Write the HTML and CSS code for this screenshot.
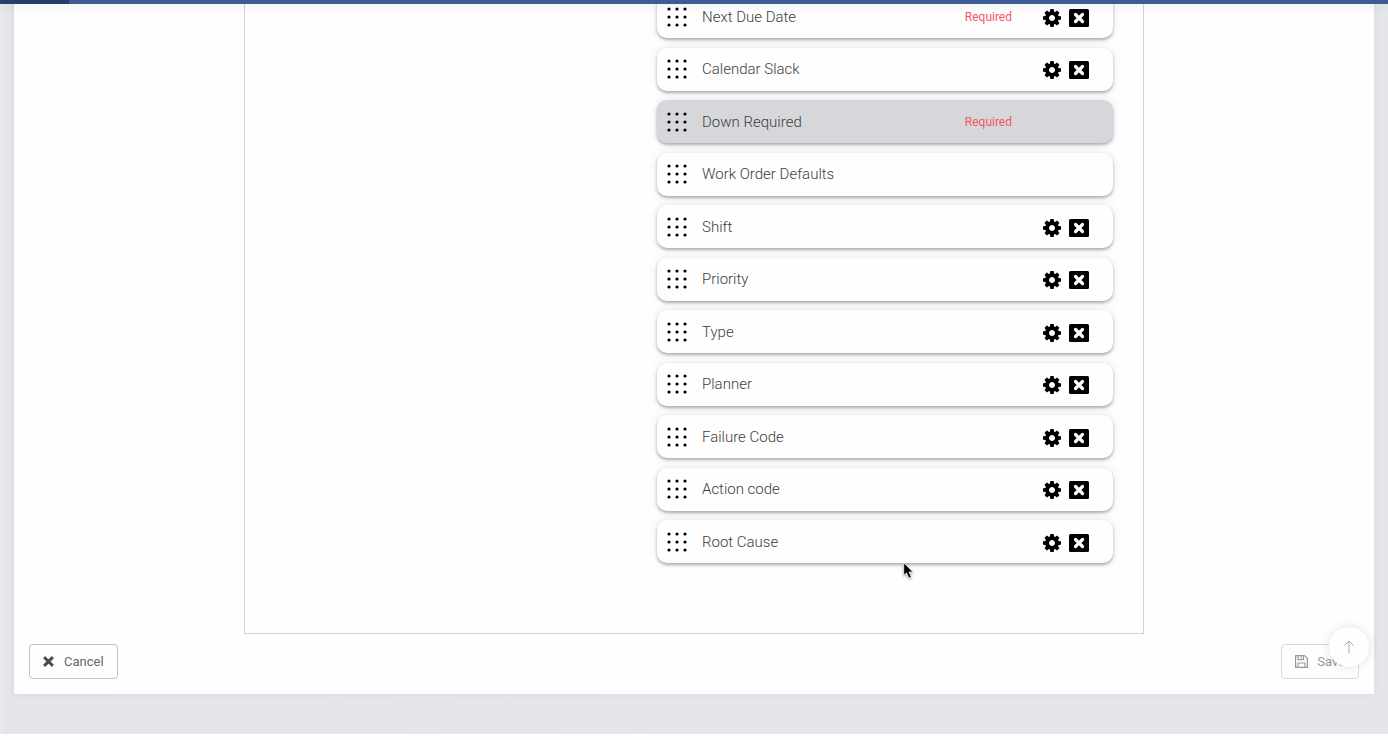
FILE: index.html
```html
<!DOCTYPE html>
<html lang="en">
<head>
<meta charset="utf-8">
<title>Form fields</title>
<link rel="stylesheet" href="styles.css">
</head>
<body>
<svg class="sprite" aria-hidden="true">
  <symbol id="grip" viewBox="0 0 20 20">
    <g fill="currentColor"><circle cx="2" cy="2" r="1.6"/><circle cx="10" cy="2" r="1.6"/><circle cx="18" cy="2" r="1.6"/><circle cx="2" cy="10" r="1.6"/><circle cx="10" cy="10" r="1.6"/><circle cx="18" cy="10" r="1.6"/><circle cx="2" cy="18" r="1.6"/><circle cx="10" cy="18" r="1.6"/><circle cx="18" cy="18" r="1.6"/></g>
  </symbol>
  <symbol id="cog" viewBox="0 128 1536 1536">
    <path fill="currentColor" d="M1024 896q0-106-75-181t-181-75-181 75-75 181 75 181 181 75 181-75 75-181zm512-109v222q0 12-8 23t-20 13l-185 28q-19 54-39 91 35 50 107 138 10 12 10 25t-9 23q-27 37-99 108t-94 71q-12 0-26-9l-138-108q-44 23-91 38-16 136-29 186-7 28-36 28h-222q-14 0-24.500-8.500t-11.500-21.500l-28-184q-49-16-90-37l-141 107q-10 9-25 9-14 0-25-11-126-114-165-168-7-10-7-23 0-12 8-23 15-21 51-66.500t54-70.500q-27-50-41-99l-183-27q-13-2-21-12.500t-8-23.500v-222q0-12 8-23t19-13l186-28q14-46 39-92-40-57-107-138-10-12-10-24 0-10 9-23 26-36 98.500-107.500t94.500-71.500q13 0 26 10l138 107q44-23 91-38 16-136 29-186 7-28 36-28h222q14 0 24.500 8.500t11.500 21.500l28 184q49 16 90 37l142-107q9-9 24-9 13 0 25 10 129 119 165 170 7 8 7 22 0 12-8 23-15 21-51 66.500t-54 70.500q26 50 41 98l183 28q13 2 21 12.500t8 23.500z"/>
  </symbol>
  <symbol id="close" viewBox="0 0 20 18">
    <rect width="20" height="18" rx="1.500" fill="currentColor"/>
    <path d="M6.500 5.500l7 7M13.500 5.500l-7 7" stroke="#fff" stroke-width="3.200" stroke-linecap="round"/>
  </symbol>
  <symbol id="times" viewBox="0 0 10 10">
    <path d="M2 2l6 6M8 2l-6 6" stroke="currentColor" stroke-width="2.700" stroke-linecap="square"/>
  </symbol>
  <symbol id="floppy" viewBox="0 0 13 13">
    <path d="M.6 .6h8.900l2.900 2.900v8.900H.6zM3 12.400V8h7v4.400M3 .6v4h5.500v-4M6.300 1.500v2" fill="none" stroke="currentColor" stroke-width="1.200" stroke-linejoin="round"/>
  </symbol>
</svg>

<header class="topbar"><div class="topbar-progress"></div></header>

<main class="page">
  <section class="panel">
    <div class="frame">
      <ul class="fields">
        <li class="field"><svg class="grip"><use href="#grip"/></svg><span class="name">Next Due Date</span><span class="required">Required</span><span class="actions"><button class="action" aria-label="Configure"><svg class="cog"><use href="#cog"/></svg></button><button class="action" aria-label="Remove"><svg class="close"><use href="#close"/></svg></button></span></li>
        <li class="field"><svg class="grip"><use href="#grip"/></svg><span class="name">Calendar Slack</span><span class="actions"><button class="action" aria-label="Configure"><svg class="cog"><use href="#cog"/></svg></button><button class="action" aria-label="Remove"><svg class="close"><use href="#close"/></svg></button></span></li>
        <li class="field field-locked"><svg class="grip"><use href="#grip"/></svg><span class="name">Down Required</span><span class="required">Required</span><span class="actions"></span></li>
        <li class="field"><svg class="grip"><use href="#grip"/></svg><span class="name">Work Order Defaults</span><span class="actions"></span></li>
        <li class="field"><svg class="grip"><use href="#grip"/></svg><span class="name">Shift</span><span class="actions"><button class="action" aria-label="Configure"><svg class="cog"><use href="#cog"/></svg></button><button class="action" aria-label="Remove"><svg class="close"><use href="#close"/></svg></button></span></li>
        <li class="field"><svg class="grip"><use href="#grip"/></svg><span class="name">Priority</span><span class="actions"><button class="action" aria-label="Configure"><svg class="cog"><use href="#cog"/></svg></button><button class="action" aria-label="Remove"><svg class="close"><use href="#close"/></svg></button></span></li>
        <li class="field"><svg class="grip"><use href="#grip"/></svg><span class="name">Type</span><span class="actions"><button class="action" aria-label="Configure"><svg class="cog"><use href="#cog"/></svg></button><button class="action" aria-label="Remove"><svg class="close"><use href="#close"/></svg></button></span></li>
        <li class="field"><svg class="grip"><use href="#grip"/></svg><span class="name">Planner</span><span class="actions"><button class="action" aria-label="Configure"><svg class="cog"><use href="#cog"/></svg></button><button class="action" aria-label="Remove"><svg class="close"><use href="#close"/></svg></button></span></li>
        <li class="field"><svg class="grip"><use href="#grip"/></svg><span class="name">Failure Code</span><span class="actions"><button class="action" aria-label="Configure"><svg class="cog"><use href="#cog"/></svg></button><button class="action" aria-label="Remove"><svg class="close"><use href="#close"/></svg></button></span></li>
        <li class="field"><svg class="grip"><use href="#grip"/></svg><span class="name">Action code</span><span class="actions"><button class="action" aria-label="Configure"><svg class="cog"><use href="#cog"/></svg></button><button class="action" aria-label="Remove"><svg class="close"><use href="#close"/></svg></button></span></li>
        <li class="field"><svg class="grip"><use href="#grip"/></svg><span class="name">Root Cause</span><span class="actions"><button class="action" aria-label="Configure"><svg class="cog"><use href="#cog"/></svg></button><button class="action" aria-label="Remove"><svg class="close"><use href="#close"/></svg></button></span></li>
      </ul>
    </div>
    <footer class="footer">
      <button class="btn"><svg class="times"><use href="#times"/></svg>Cancel</button>
      <button class="btn btn-save" disabled><svg class="floppy"><use href="#floppy"/></svg>Save</button>
    </footer>
  </section>
</main>

<button class="to-top" aria-label="Back to top"><svg class="arrow" viewBox="0 0 12 14"><path d="M6 13.500V1M1.500 5.500L6 1l4.500 4.500" fill="none" stroke="currentColor"/></svg></button>
<svg class="cursor" viewBox="0 0 12 18" aria-hidden="true"><path d="M.7 .8v12.700l2.800-2.600 2.300 5.300 2.600-1.100-2.300-5.100h4.100z" fill="#000" stroke="#fff" stroke-width=".8"/></svg>
</body>
</html>
```
FILE: styles.css
```css
* {
  box-sizing: border-box;
}

body {
  margin: 0;
  background: #fefefe;
  color: #55565a;
  font-family: Roboto, "Liberation Sans", sans-serif;
  overflow: hidden;
}

svg {
  display: block;
}

button {
  font: inherit;
  color: inherit;
}

.sprite {
  position: absolute;
  width: 0;
  height: 0;
}

.topbar {
  position: fixed;
  inset: 0 0 auto;
  z-index: 2;
  height: 4px;
  background: #3d5c96;
  box-shadow: 0 1px 8px rgba(80, 120, 110, 0.16);
}

.topbar-progress {
  width: 5%;
  height: 100%;
  background: #24406a;
}

.page {
  padding: 0 14px 40px;
  background: linear-gradient(90deg, #ece8e8 0, #e3e6ec 5px, #e3e5e9 14px, #e4e6ea 100%);
}

.panel {
  display: flow-root;
  background: #fefefe;
  box-shadow: 0 0 6px rgba(60, 65, 80, 0.08);
}

.frame {
  display: flex;
  justify-content: flex-end;
  max-width: 900px;
  margin: 0 auto;
  padding: 0 30px 70px;
  border: 1px solid #cfd1d9;
  border-top: 0;
}

.fields {
  display: flex;
  flex-direction: column;
  justify-content: space-between;
  width: 456px;
  min-height: 568px;
  margin: -5px 0 0;
  padding: 0;
  list-style: none;
}

.field {
  display: flex;
  align-items: center;
  height: 43px;
  padding: 0 24px 0 10px;
  border-radius: 10px;
  background: #fefefe;
  box-shadow: 0 2px 3px rgba(50, 52, 70, 0.36), 0 0 8px rgba(90, 90, 150, 0.14);
}

.field-locked {
  background: #d6d7da;
}

.grip {
  width: 20px;
  height: 20px;
  margin-right: 15px;
  color: #000;
}

.name {
  flex: 1;
  color: #3c3d40;
  font-size: 15px;
  font-weight: 300;
  line-height: 20px;
}

.required {
  margin-right: 31px;
  color: #f4585f;
  font-size: 12px;
  line-height: 16px;
}

.actions {
  display: flex;
  align-items: center;
  gap: 8px;
  width: 46px;
  padding-top: 2px;
}

.action {
  padding: 0;
  border: 0;
  background: none;
  color: #000;
}

.cog {
  width: 18px;
  height: 18px;
}

.close {
  width: 20px;
  height: 18px;
}

.footer {
  display: flex;
  justify-content: space-between;
  padding: 10px 15px 15px;
}

.btn {
  display: flex;
  align-items: center;
  gap: 10px;
  height: 35px;
  padding: 0 13px;
  border: 1px solid #bfc1c9;
  border-radius: 4px;
  background: #fefefe;
  color: #66676a;
  font-size: 13px;
}

.btn-save {
  gap: 9px;
  border-color: #d9dadd;
  color: #98999b;
}

.times {
  width: 11px;
  height: 11px;
  color: #4a4b4d;
}

.floppy {
  width: 13px;
  height: 13px;
}

.to-top {
  position: fixed;
  right: 19px;
  bottom: 73px;
  display: grid;
  place-items: center;
  width: 40px;
  height: 40px;
  padding: 0;
  border: 0;
  border-radius: 50%;
  background: #fefefe;
  color: #aaa;
  box-shadow: 0 0 10px rgba(40, 40, 50, 0.14);
}

.arrow {
  width: 12px;
  height: 14px;
}

.cursor {
  position: absolute;
  left: 903px;
  top: 562px;
  z-index: 3;
  width: 12px;
  height: 18px;
  filter: drop-shadow(0 1px 1px rgba(0, 0, 0, 0.35));
}
```
